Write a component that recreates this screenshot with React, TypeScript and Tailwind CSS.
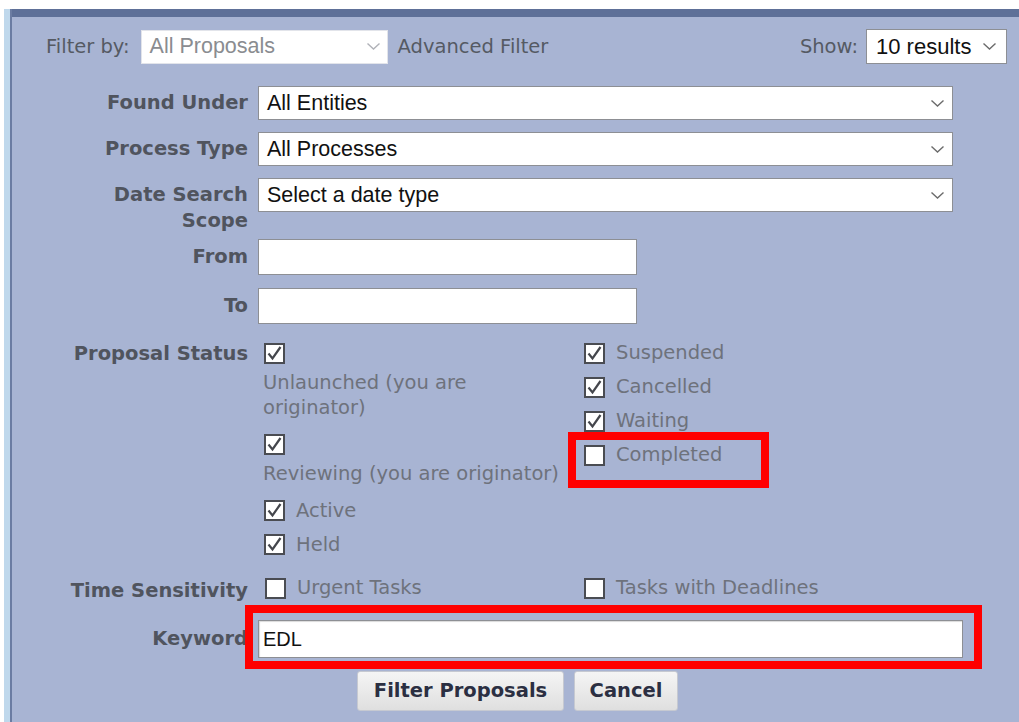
import type { ReactNode } from 'react';

const STATUS_LEFT = [
  { label: 'Unlaunched (you are originator)', checked: true, wraps: true },
  { label: 'Reviewing (you are originator)', checked: true, wraps: true },
  { label: 'Active', checked: true },
  { label: 'Held', checked: true },
];

const STATUS_RIGHT = [
  { label: 'Suspended', checked: true },
  { label: 'Cancelled', checked: true },
  { label: 'Waiting', checked: true },
  { label: 'Completed', checked: false, flagged: true },
];

function Chevron({ color = '#6b6b6b' }: { color?: string }) {
  return (
    <svg width="15" height="9" viewBox="0 0 15 9" className="shrink-0">
      <path d="M1.5 1.5l6 5.5 6-5.5" fill="none" stroke={color} strokeWidth="1.4" />
    </svg>
  );
}

function Box({ checked }: { checked: boolean }) {
  return (
    <span className="inline-flex h-[21px] w-[21px] shrink-0 items-center justify-center border-2 border-[#4a4c52] bg-white">
      {checked && (
        <svg width="17" height="17" viewBox="0 0 17 17">
          <path d="M2.5 8.5l4 5 8-11.5" fill="none" stroke="#44464c" strokeWidth="2.2" />
        </svg>
      )}
    </span>
  );
}

function Select({ value, width }: { value: string; width: string }) {
  return (
    <div className={`flex h-[34px] items-center justify-between border border-[#8d8f94] bg-white pl-[8px] pr-[7px] font-['Liberation_Sans',sans-serif] text-[21.5px] text-[#111] ${width}`}>
      <span>{value}</span>
      <Chevron />
    </div>
  );
}

function Row({ label, className = '', labelPad = 'pt-[4px]', children }: { label: string; className?: string; labelPad?: string; children: ReactNode }) {
  return (
    <div className={`flex items-start gap-[10px] ${className}`}>
      <div className={`w-[190px] shrink-0 text-right text-[19.5px] font-bold leading-[26px] text-[#50545e] ${labelPad}`}>
        {label}
      </div>
      {children}
    </div>
  );
}

function Flag({ className }: { className: string }) {
  return <div className={`pointer-events-none absolute z-10 border-[8px] border-[#ff0000] ${className}`} />;
}

export default function App() {
  return (
    <div className="flex min-h-screen bg-white pl-[4px] pt-[9px] font-['DejaVu_Sans',sans-serif]">
      <div className="w-[6px] shrink-0 bg-[#bfd8ec]" />
      <div className="flex-1 border-l-2 border-[#6b7ca2] bg-[#a8b4d3] pb-[12px]">
        <div className="h-[8px] bg-[#5e7098]" />

        {/* quick filter bar */}
        <div className="ml-[34px] mr-[12px] mt-[12px] flex items-center justify-between text-[19.5px] text-[#555a63]">
          <div className="flex items-center">
            <span>Filter by:</span>
            <div className="ml-[11px] flex h-[34px] w-[247px] items-center justify-between border border-[#e2e4ea] bg-white pl-[8px] pr-[6px] font-['Liberation_Sans',sans-serif] text-[21.5px] text-[#8a8c90]">
              <span>All Proposals</span>
              <Chevron color="#b0b2b8" />
            </div>
            <span className="ml-[10px]">Advanced Filter</span>
          </div>
          <div className="flex items-center">
            <span>Show:</span>
            <div className="ml-[8px] flex h-[35px] w-[141px] items-center justify-between border border-[#8d8f94] bg-white pl-[9px] pr-[9px] font-['Liberation_Sans',sans-serif] text-[22px] text-[#111]">
              <span>10 results</span>
              <Chevron />
            </div>
          </div>
        </div>

        {/* advanced filter form */}
        <div className="pl-[46px]">
          <Row label="Found Under" className="mt-[22px]">
            <Select value="All Entities" width="w-[695px]" />
          </Row>
          <Row label="Process Type" className="mt-[12px]">
            <Select value="All Processes" width="w-[695px]" />
          </Row>
          <Row label="Date Search Scope" className="mt-[12px]">
            <Select value="Select a date type" width="w-[695px]" />
          </Row>
          <Row label="From" labelPad="pt-[5px]" className="mt-[5px]">
            <div className="h-[36px] w-[379px] border border-[#8d8f94] bg-white" />
          </Row>
          <Row label="To" labelPad="pt-[5px]" className="mt-[13px]">
            <div className="h-[36px] w-[379px] border border-[#8d8f94] bg-white" />
          </Row>

          <Row label="Proposal Status" labelPad="pt-[5px]" className="mt-[12px]">
            <div className="flex pl-[5px] text-[19.5px] text-[#6e727c]">
              <div className="w-[320px]">
                {STATUS_LEFT.map((s) => (
                  <div key={s.label} className={`flex flex-wrap items-center ${s.wraps ? 'pb-[7px]' : ''}`}>
                    <div className="flex h-[34px] items-center pl-[1px] pr-[11px]">
                      <Box checked={s.checked} />
                    </div>
                    <span className="max-w-[304px] leading-[25px]">{s.label}</span>
                  </div>
                ))}
              </div>
              <div>
                {STATUS_RIGHT.map((s) => (
                  <div key={s.label} className="relative flex h-[34px] items-center gap-[11px] pl-[1px]">
                    <Box checked={s.checked} />
                    <span>{s.label}</span>
                    {s.flagged && <Flag className="-left-[15px] -top-[6px] h-[56px] w-[201px]" />}
                  </div>
                ))}
              </div>
            </div>
          </Row>

          <Row label="Time Sensitivity" labelPad="pt-[7px]" className="mt-[10px]">
            <div className="flex pl-[5px] text-[19.5px] text-[#6e727c]">
              <div className="flex h-[34px] w-[320px] items-center gap-[11px] pl-[2px]">
                <Box checked={false} />
                <span>Urgent Tasks</span>
              </div>
              <div className="flex h-[34px] items-center gap-[11px] pl-[1px]">
                <Box checked={false} />
                <span>Tasks with Deadlines</span>
              </div>
            </div>
          </Row>

          <Row label="Keyword" labelPad="pt-[6px]" className="mt-[15px]">
            <div className="relative">
              <div className="flex h-[38px] w-[705px] items-center border border-[#8d8f94] bg-white pl-[4px] font-['Liberation_Sans',sans-serif] text-[20px] text-[#111] shadow-[inset_1px_1px_1px_rgba(0,0,0,0.15)]">
                EDL
              </div>
              <Flag className="-left-[13px] -top-[15px] h-[64px] w-[737px]" />
            </div>
          </Row>
        </div>

        <div className="mt-[13px] flex justify-center gap-[10px] pl-[4px]">
          <button className="h-[40px] w-[207px] rounded-[3px] border border-[#c6c9d1] bg-linear-to-b from-[#f5f5f5] to-[#dfdfdf] text-[19.5px] font-bold text-[#2b2f42]">
            Filter Proposals
          </button>
          <button className="h-[40px] w-[104px] rounded-[3px] border border-[#c6c9d1] bg-linear-to-b from-[#f5f5f5] to-[#dfdfdf] text-[19.5px] font-bold text-[#2b2f42]">
            Cancel
          </button>
        </div>
      </div>
    </div>
  );
}
